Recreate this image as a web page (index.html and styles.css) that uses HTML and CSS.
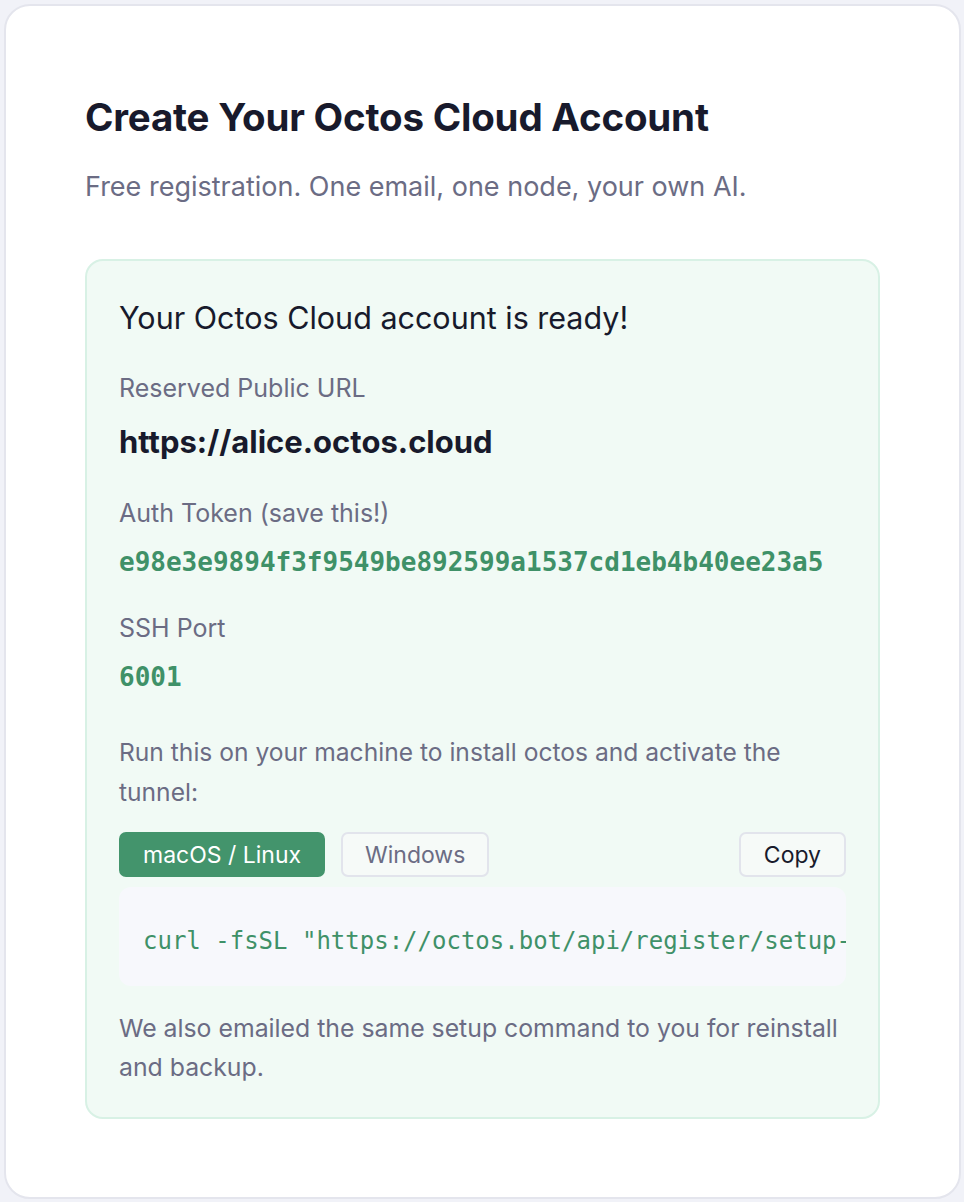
FILE: index.html
```html
<!DOCTYPE html>
<html lang="en">
<head>
<meta charset="utf-8">
<title>Create Your Octos Cloud Account</title>
<link rel="stylesheet" href="styles.css">
</head>
<body>
<main class="card">
  <h1 class="title">Create Your Octos Cloud Account</h1>
  <p class="subtitle">Free registration. One email, one node, your own AI.</p>
  <section class="success">
    <h2 class="ready">Your Octos Cloud account is ready!</h2>
    <div class="label l-url">Reserved Public URL</div>
    <div class="url">https://alice.octos.cloud</div>
    <div class="label l-token">Auth Token (save this!)</div>
    <div class="mono-value">e98e3e9894f3f9549be892599a1537cd1eb4b40ee23a5</div>
    <div class="label l-ssh">SSH Port</div>
    <div class="mono-value">6001</div>
    <p class="instructions">Run this on your machine to install octos and activate the tunnel:</p>
    <div class="toolbar">
      <div class="tabs">
        <button class="btn btn-active">macOS / Linux</button>
        <button class="btn btn-tab">Windows</button>
      </div>
      <button class="btn btn-copy">Copy</button>
    </div>
    <pre class="code">curl -fsSL "https://octos.bot/api/register/setup-script?token=e98e3e9894f3f9549be892599a1537cd1eb4b40ee23a5" | bash</pre>
    <p class="note">We also emailed the same setup command to you for reinstall and backup.</p>
  </section>
</main>
</body>
</html>
```
FILE: styles.css
```css
* { box-sizing: border-box; }
html, body { margin: 0; padding: 0; }
body {
  background: #f1f2f8;
  padding: 4px 3px 3px 4px;
  font-family: Inter, "Noto Sans", "Liberation Sans", sans-serif;
  color: #1a1b2e;
}
.card {
  background: #ffffff;
  border: 2px solid #e4e5ed;
  border-radius: 26px;
  padding: 89px 79px 78px 79px;
  min-height: 1195px;
}
.title {
  margin: 0;
  font-size: 38.5px;
  line-height: 44px;
  font-weight: 700;
  letter-spacing: -0.2px;
  color: #181a2c;
}
.subtitle {
  margin: 32px 0 0;
  font-size: 27px;
  line-height: 32px;
  color: #6b6c84;
}
.success {
  margin-top: 56px;
  background: #f1faf5;
  border: 2px solid #d8f1e5;
  border-radius: 18px;
  padding: 39px 32px 30px 32px;
  display: flex;
  flex-direction: column;
}
.ready {
  margin: 0;
  font-size: 30.5px;
  line-height: 36px;
  font-weight: 400;
  color: #181a2c;
}
.label {
  font-size: 25px;
  line-height: 30px;
  color: #6b6c84;
}
.l-url { margin-top: 37px; }
.l-token { margin-top: 38px; }
.l-ssh { margin-top: 33px; }
.url {
  margin-top: 21px;
  font-size: 31px;
  line-height: 36px;
  font-weight: 700;
  color: #181a2c;
}
.mono-value {
  margin-top: 16px;
  font-family: "DejaVu Sans Mono", "Liberation Mono", monospace;
  font-weight: 700;
  font-size: 26px;
  line-height: 36px;
  color: #3f9168;
}
.instructions {
  margin: 37px 0 0;
  font-size: 24.6px;
  line-height: 40px;
  color: #6b6c84;
}
.toolbar {
  margin-top: 20px;
  display: flex;
  justify-content: space-between;
  align-items: center;
}
.tabs { display: flex; gap: 16px; }
.btn {
  font-family: Inter, "Noto Sans", "Liberation Sans", sans-serif;
  font-size: 23px;
  line-height: 28px;
  height: 45px;
  padding: 0 22px;
  border-radius: 7px;
  border: 2px solid #e2e4ec;
  background: #f6faf8;
  color: #6b6c84;
}
.btn-active {
  background: #43946c;
  border-color: #43946c;
  color: #ffffff;
}
.btn-copy { color: #181a2c; padding: 0 23px; }
.code {
  margin: 10px 0 0;
  background: #f7f8fc;
  border-radius: 12px;
  padding: 42px 24px 33px 24px;
  font-family: "DejaVu Sans Mono", "Liberation Mono", monospace;
  font-size: 24px;
  line-height: 24px;
  color: #3f9168;
  white-space: pre;
  overflow: hidden;
}
.note {
  margin: 23px 0 0;
  font-size: 24.8px;
  line-height: 39px;
  color: #6b6c84;
}
```
